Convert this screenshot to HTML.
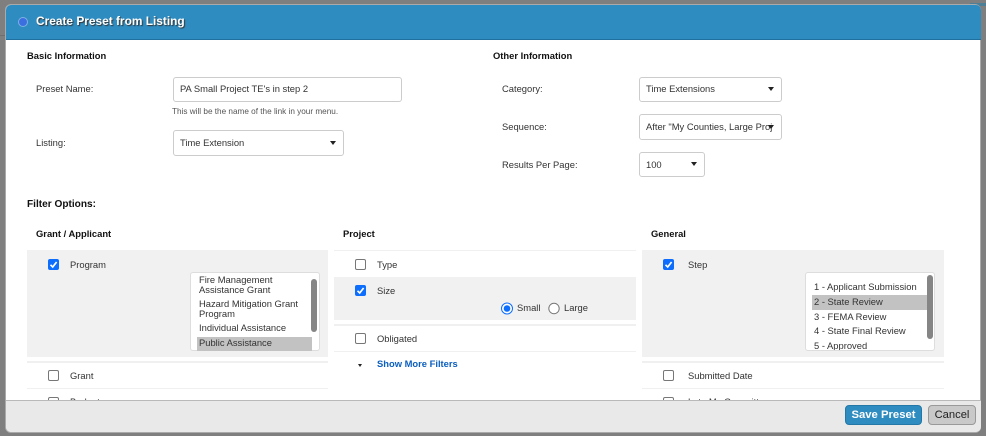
<!DOCTYPE html>
<html><head><meta charset="utf-8"><style>
html,body{margin:0;padding:0;width:986px;height:436px;overflow:hidden;background:#7f7f7f;font-family:"Liberation Sans",sans-serif;color:#333}
#m{position:absolute;left:5px;top:4px;width:976px;height:429px;background:#fff;border-radius:6px;border:1px solid #aaa;box-sizing:border-box;overflow:hidden}
#w{position:absolute;left:0;top:0;width:986px;height:436px;filter:blur(.3px)}
.a{position:absolute;white-space:nowrap}
.t{position:absolute;white-space:nowrap;font-size:9.4px;line-height:12px;color:#333}
.b{font-weight:bold;color:#111}
.box{position:absolute;background:#fff;border:1px solid #ccc;border-radius:3px;box-sizing:border-box}
.ar{position:absolute;width:0;height:0;border-left:3.5px solid transparent;border-right:3.5px solid transparent;border-top:4px solid #222}
.bg{position:absolute;background:#f1f1f1}
.ln{position:absolute;background:#f0f0f0;height:1px}
.cb{position:absolute;width:11px;height:11px;box-sizing:border-box;background:#fff;border:1px solid #777;border-radius:2px}
.ck{position:absolute;width:11px;height:11px;background:#0d6efd;border-radius:2px}
.ck svg{position:absolute;left:0;top:0}
.sel{position:absolute;background:#c2c2c2}
.sb{position:absolute;background:#858585;border-radius:3px}
</style></head><body>
<div class="a" style="left:0;top:35px;width:5px;height:1px;background:#6f6f6f"></div>
<div class="a" style="left:970px;top:3px;width:16px;height:3px;background:#4d7f96"></div>
<div id="m"></div>
<div id="w">
<div class="a" style="left:6px;top:5px;width:975px;height:35px;background:#2e8cc0;border-bottom:1px solid #1f6f9f;box-sizing:border-box;border-radius:5px 5px 0 0"></div>
<div class="a" style="left:18px;top:17px;width:10px;height:10px;box-sizing:border-box;border-radius:50%;background:#3b6fe0;border:1px solid #7fb0e2"></div>
<div class="a" style="left:36px;top:14px;font-size:11.9px;line-height:14px;font-weight:bold;color:#fff;text-shadow:1px 1px 1px #333">Create Preset from Listing</div>

<div class="t b" style="left:27px;top:50px">Basic Information</div>
<div class="t" style="left:36px;top:83px">Preset Name:</div>
<div class="box" style="left:173px;top:77px;width:229px;height:25px"></div>
<div class="t" style="left:180px;top:83px">PA Small Project TE's in step 2</div>
<div class="t" style="left:172px;top:106px;font-size:8.2px;color:#555">This will be the name of the link in your menu.</div>
<div class="t" style="left:36px;top:137px">Listing:</div>
<div class="box" style="left:173px;top:130px;width:171px;height:26px"></div>
<div class="t" style="left:180px;top:137px">Time Extension</div>
<div class="ar" style="left:330px;top:141px"></div>

<div class="t b" style="left:493px;top:50px">Other Information</div>
<div class="t" style="left:502px;top:83px">Category:</div>
<div class="box" style="left:639px;top:77px;width:143px;height:25px"></div>
<div class="t" style="left:646px;top:83px">Time Extensions</div>
<div class="ar" style="left:768px;top:87px"></div>
<div class="t" style="left:502px;top:121px">Sequence:</div>
<div class="box" style="left:639px;top:114px;width:143px;height:26px"></div>
<div class="t" style="left:646px;top:121px;width:131px;overflow:hidden">After "My Counties, Large Proj</div>
<div class="ar" style="left:768px;top:125px"></div>
<div class="t" style="left:502px;top:159px">Results Per Page:</div>
<div class="box" style="left:639px;top:152px;width:66px;height:25px"></div>
<div class="t" style="left:646px;top:159px">100</div>
<div class="ar" style="left:691px;top:162px"></div>

<div class="t b" style="left:27px;top:199px;line-height:12px;font-size:10.1px;transform:translateY(0)">Filter Options:</div>
<div class="t b" style="left:36px;top:228px">Grant / Applicant</div>
<div class="t b" style="left:343px;top:228px">Project</div>
<div class="t b" style="left:651px;top:228px">General</div>

<!-- left -->
<div class="bg" style="left:27px;top:250px;width:301px;height:107px"></div>
<div class="ck" style="left:48px;top:259px"><svg width="11" height="11"><path d="M2.5 5.8 4.7 8 8.6 3" fill="none" stroke="#fff" stroke-width="1.7"/></svg></div>
<div class="t" style="left:70px;top:259px">Program</div>
<div class="box" style="left:190px;top:272px;width:130px;height:79px;overflow:hidden;border-color:#ddd"></div>
<div class="sel" style="left:197px;top:337px;width:115px;height:14px"></div>
<div class="sb" style="left:311px;top:279px;width:6px;height:53px"></div>
<div class="t" style="left:199px;top:275px;line-height:10.4px">Fire Management<br>Assistance Grant</div>
<div class="t" style="left:199px;top:299px;line-height:10.4px">Hazard Mitigation Grant<br>Program</div>
<div class="t" style="left:199px;top:322px">Individual Assistance</div>
<div class="t" style="left:199px;top:337px">Public Assistance</div>
<div class="ln" style="left:27px;top:361px;width:301px;height:2px"></div>
<div class="cb" style="left:48px;top:370px"></div>
<div class="t" style="left:70px;top:370px">Grant</div>
<div class="ln" style="left:27px;top:388px;width:301px"></div>
<div class="cb" style="left:48px;top:397px"></div>
<div class="t" style="left:70px;top:396px">Budget</div>

<!-- middle -->
<div class="ln" style="left:334px;top:250px;width:302px"></div>
<div class="cb" style="left:355px;top:259px"></div>
<div class="t" style="left:377px;top:259px">Type</div>
<div class="bg" style="left:334px;top:277px;width:302px;height:43px"></div>
<div class="ck" style="left:355px;top:285px"><svg width="11" height="11"><path d="M2.5 5.8 4.7 8 8.6 3" fill="none" stroke="#fff" stroke-width="1.7"/></svg></div>
<div class="t" style="left:377px;top:285px">Size</div>
<svg class="a" style="left:500px;top:302px" width="64" height="14"><circle cx="7" cy="6.5" r="5.5" fill="#fff" stroke="#0d6efd" stroke-width="1"/><circle cx="7" cy="6.5" r="3.3" fill="#0d6efd"/><circle cx="54" cy="6.5" r="5.2" fill="#fff" stroke="#777" stroke-width="1"/></svg>
<div class="t" style="left:517px;top:302px">Small</div>
<div class="t" style="left:564px;top:302px">Large</div>
<div class="ln" style="left:334px;top:324px;width:302px;height:2px"></div>
<div class="cb" style="left:355px;top:333px"></div>
<div class="t" style="left:377px;top:333px">Obligated</div>
<div class="ln" style="left:334px;top:351px;width:302px"></div>
<div class="ar" style="left:358px;top:364px;border-left-width:2.5px;border-right-width:2.5px;border-top-width:3px"></div>
<div class="t" style="left:377px;top:358px;font-weight:bold;color:#0b5fc0">Show More Filters</div>

<!-- right -->
<div class="bg" style="left:642px;top:250px;width:302px;height:107px"></div>
<div class="ck" style="left:663px;top:259px"><svg width="11" height="11"><path d="M2.5 5.8 4.7 8 8.6 3" fill="none" stroke="#fff" stroke-width="1.7"/></svg></div>
<div class="t" style="left:688px;top:259px">Step</div>
<div class="box" style="left:805px;top:272px;width:130px;height:79px;border-color:#ddd"></div>
<div class="sel" style="left:812px;top:295px;width:115px;height:15px"></div>
<div class="sb" style="left:927px;top:275px;width:6px;height:64px"></div>
<div class="t" style="left:814px;top:281px">1 - Applicant Submission</div>
<div class="t" style="left:814px;top:296px">2 - State Review</div>
<div class="t" style="left:814px;top:311px">3 - FEMA Review</div>
<div class="t" style="left:814px;top:325px">4 - State Final Review</div>
<div class="t" style="left:814px;top:340px;height:10px;overflow:hidden">5 - Approved</div>
<div class="ln" style="left:642px;top:361px;width:302px;height:2px"></div>
<div class="cb" style="left:663px;top:370px"></div>
<div class="t" style="left:688px;top:370px">Submitted Date</div>
<div class="ln" style="left:642px;top:388px;width:302px"></div>
<div class="cb" style="left:663px;top:397px"></div>
<div class="t" style="left:688px;top:396px">Late My Committee</div>

<!-- footer -->
<div class="a" style="left:6px;top:400px;width:975px;height:32px;background:#e9e9e9;border-top:1px solid #b9b9b9;box-sizing:border-box;border-radius:0 0 5px 5px"></div>
<div class="a" style="left:845px;top:405px;width:77px;height:20px;background:#2e8cc0;border:1px solid #2478a8;box-sizing:border-box;border-radius:4px;color:#fff;font-weight:bold;font-size:11.3px;line-height:18px;text-align:center">Save Preset</div>
<div class="a" style="left:928px;top:405px;width:48px;height:20px;background:#c9c9c9;border:1px solid #999;box-sizing:border-box;border-radius:4px;color:#222;font-size:11.2px;line-height:18px;text-align:center">Cancel</div>
</div>
</body></html>
